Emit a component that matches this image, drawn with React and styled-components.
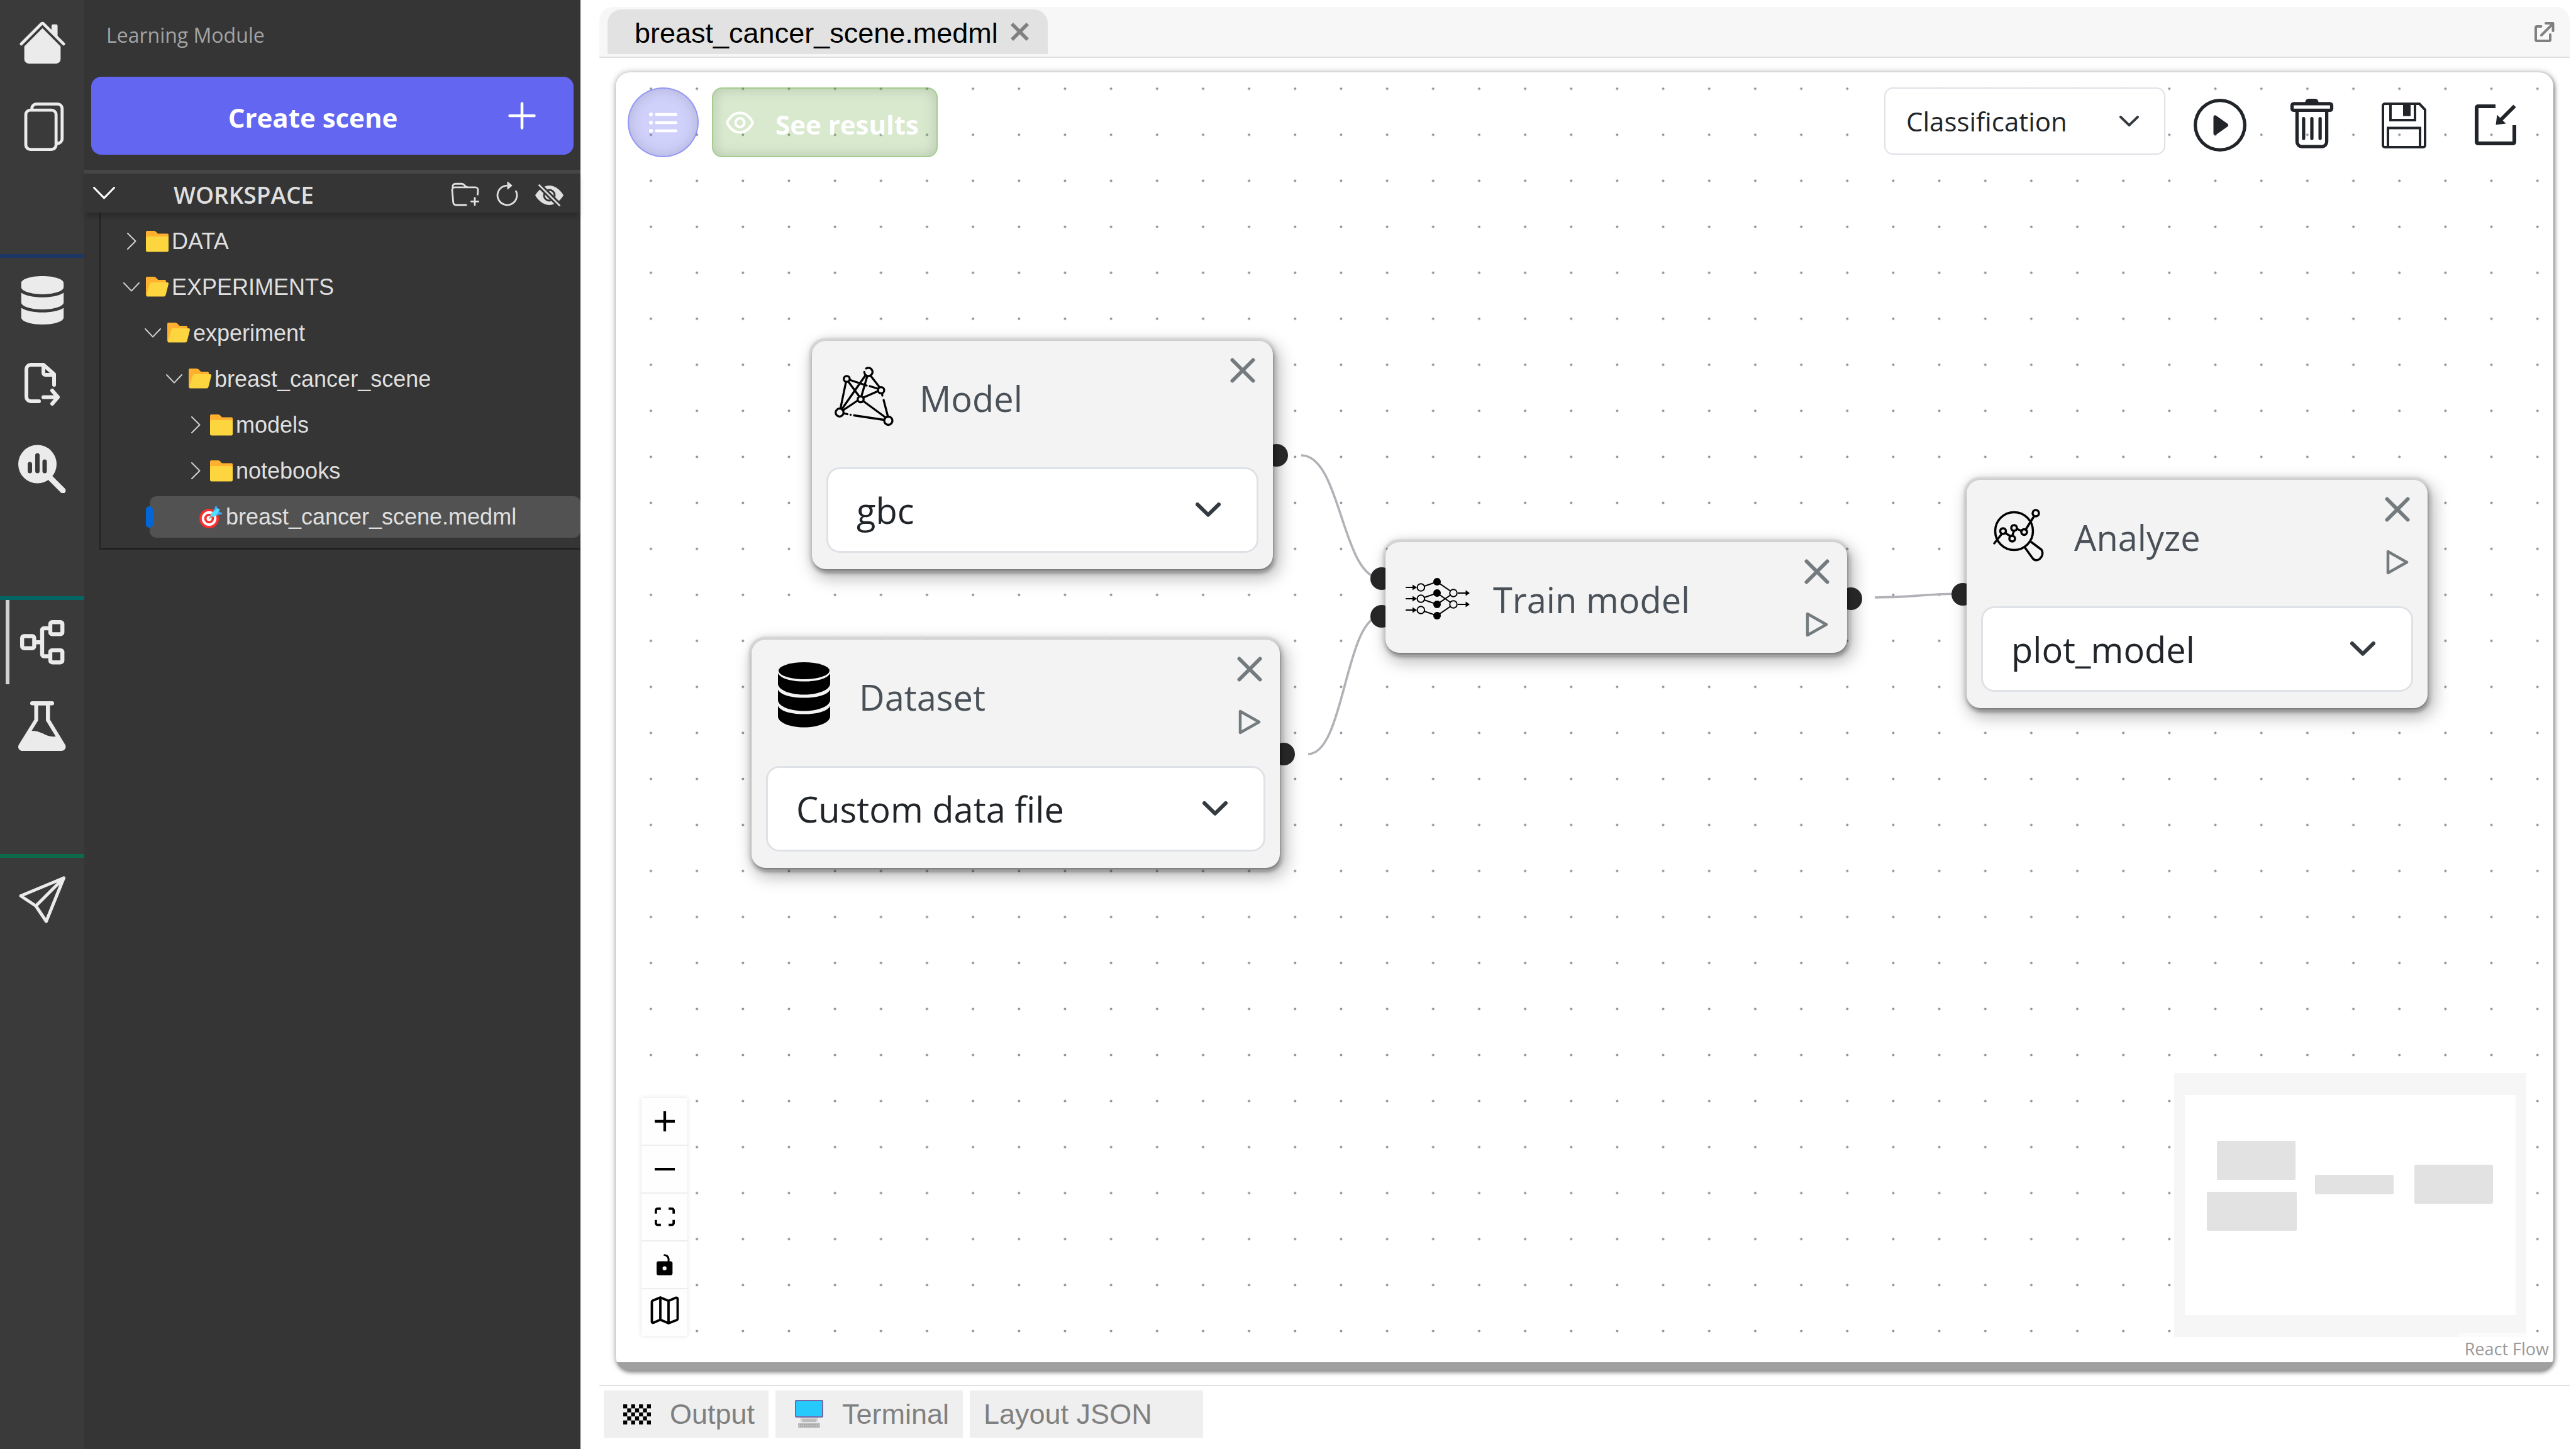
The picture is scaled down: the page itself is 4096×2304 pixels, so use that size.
import React from "react";
import styled, { createGlobalStyle, css } from "styled-components";
import {
  BsHouseFill,
  BsFiles,
  BsFolderPlus,
  BsArrowClockwise,
  BsEyeSlashFill,
  BsPlayCircle,
  BsTrash,
} from "react-icons/bs";
import { FaDatabase } from "react-icons/fa";

const UI_FONT = `"Open Sans", "Noto Sans", sans-serif`;
const TAB_FONT = `"Liberation Sans", Arial, sans-serif`;

/* Zoom level of the flow canvas; the grid has one dot every 20 flow units. */
const ZOOM = 3.6582;
const GRID = 20 * ZOOM;

const GlobalStyle = createGlobalStyle`
  *, *::before, *::after { box-sizing: border-box; }
  body { margin: 0; background: #fff; font-family: ${UI_FONT}; color: #212529; }
  button, select { font: inherit; color: inherit; margin: 0; }
  button { background: none; border: 0; padding: 0; cursor: pointer; }
  h1, h2, p, ul { margin: 0; padding: 0; font-weight: 400; }
  ul { list-style: none; }
  a { color: inherit; text-decoration: none; }
  svg { display: block; flex: none; }
`;

/* ---------- page frame ---------- */

const Page = styled.div`
  display: flex;
  min-height: 100vh;
`;

const Rail = styled.nav`
  flex: 0 0 134px;
  display: flex;
  flex-direction: column;
  gap: 136px;
  background: #3a3a3a;
  color: #ebebeb;
`;

const RailGroup = styled.div`
  display: flex;
  flex-direction: column;
  border-top: ${(p) => (p.$line ? `6px solid ${p.$line}` : "0")};
`;

const RailButton = styled.button`
  height: 134px;
  display: flex;
  align-items: center;
  justify-content: center;
  ${(p) =>
    p.$active &&
    css`
      background: linear-gradient(#d3d3d3, #d3d3d3) 9px 0 / 6px 100% no-repeat;
    `}
`;

/* ---------- workspace panel ---------- */

const Panel = styled.aside`
  flex: 0 0 789px;
  display: flex;
  flex-direction: column;
  background: #353535;
  color: #dfdfdf;
`;

const PanelTitle = styled.p`
  padding: 34px 35px 44px;
  font-size: 32px;
  line-height: 44px;
  color: #a3a3a3;
`;

const CreateButton = styled.button`
  display: flex;
  align-items: center;
  gap: 18px;
  height: 124px;
  margin: 0 11px 24px;
  padding: 0 60px;
  border-radius: 16px;
  background: #6366f1;
  color: #fff;
  font-size: 42px;
  font-weight: 700;
`;

const ButtonLabel = styled.span`
  flex: 1;
  padding-top: 5px;
  text-align: center;
`;

const WorkspaceHeader = styled.header`
  position: relative;
  display: flex;
  align-items: center;
  height: 68px;
  padding: 0 27px 0 14px;
  border-top: 6px solid #464646;
  box-shadow: 0 9px 9px -3px rgba(0, 0, 0, 0.22);
`;

const WorkspaceToggle = styled.button`
  flex: 1;
  display: flex;
  align-items: center;
  gap: 93px;
  font-size: 37px;
  font-weight: 600;
  line-height: 48px;
`;

const ToggleLabel = styled.span`
  padding-top: 5px;
`;

const HeaderTools = styled.div`
  display: flex;
  gap: 22px;
  padding-top: 6px;
`;

const Tree = styled.ul`
  margin-left: 24px;
  padding: 9px 0 13px;
  border-left: 2px solid #222;
  border-bottom: 3px solid #222;
  font-family: ${TAB_FONT};
  font-size: 36px;
`;

const TreeItem = styled.li`
  display: flex;
  align-items: center;
  height: 73px;
  padding-left: ${(p) => (p.$selected ? 72 : 31 + p.$depth * 34)}px;
`;

const TreeRow = styled.button`
  display: flex;
  align-items: center;
  width: 100%;
  gap: 5px;
  text-align: left;
`;

const Twisty = styled.span`
  flex: 0 0 36px;
  display: flex;
  justify-content: center;
`;

const SelectedMark = styled.span`
  width: 11px;
  height: 34px;
  border-radius: 6px;
  background: #0366d6;
  z-index: 1;
`;

const SelectedRow = styled(TreeRow)`
  height: 66px;
  margin-left: -5px;
  padding-left: 79px;
  border-radius: 11px;
  background: #525252;
`;

/* ---------- main area ---------- */

const Main = styled.main`
  flex: 1;
  min-width: 0;
  display: flex;
  flex-direction: column;
  padding: 11px 10px 18px 30px;
`;

const TabBar = styled.div`
  display: flex;
  align-items: center;
  justify-content: space-between;
  height: 81px;
  padding: 0 24px 0 13px;
  border-bottom: 2px solid #e0e0e0;
  border-radius: 22px 22px 0 0;
  background: #f7f7f7;
  color: #808080;
`;

const Tab = styled.div`
  display: flex;
  align-items: center;
  gap: 20px;
  height: 71px;
  padding: 0 30px 0 43px;
  border-radius: 22px 22px 0 0;
  background: #e2e2e2;
  font-family: ${TAB_FONT};
  font-size: 45px;
`;

const TabName = styled.span`
  padding-top: 4px;
  color: #000;
`;

const Card = styled.section`
  flex: 1;
  display: flex;
  margin: 23px 26px;
  padding-bottom: 13px;
  border-radius: 22px;
  background: #a0a0a0;
  overflow: hidden;
  box-shadow: 0 0 11px rgba(0, 0, 0, 0.28), 2px 3px 6px rgba(0, 0, 0, 0.4);
`;

const Canvas = styled.div`
  position: relative;
  flex: 1;
  background: #fff;
`;

const Layer = styled.svg`
  position: absolute;
  inset: 0;
  width: 100%;
  height: 100%;
`;

const Toolbar = styled.div`
  position: relative;
  display: flex;
  align-items: flex-start;
  gap: 45px;
  padding: 24px 50px 0 19px;
`;

const ToolbarStart = styled.div`
  flex: 1;
  display: flex;
  gap: 21px;
`;

const tinted = css`
  display: flex;
  align-items: center;
  height: 111px;
  color: #fff;
  box-shadow: inset 0 0 22px rgba(0, 0, 0, 0.16);
`;

const RoundButton = styled.button`
  ${tinted}
  justify-content: center;
  width: 113px;
  border: 2px solid rgba(99, 102, 241, 0.55);
  border-radius: 50%;
  background: rgba(99, 102, 241, 0.3);
`;

const ResultsButton = styled.button`
  ${tinted}
  gap: 26px;
  width: 359px;
  padding: 0 20px;
  border: 2px solid rgba(104, 171, 67, 0.45);
  border-radius: 16px;
  background: rgba(104, 171, 67, 0.26);
  font-size: 42px;
  font-weight: 700;
`;

const ToolbarIcons = styled.div`
  display: flex;
  gap: 62px;
  padding-top: 18px;
`;

const IconButton = styled.button`
  display: flex;
  align-items: center;
  justify-content: center;
  width: ${(p) => p.$size}px;
  height: ${(p) => p.$size}px;
`;

/* A native select and its chevron share one grid cell. */
const SelectFrame = styled.div`
  display: grid;
  align-items: center;
  width: ${(p) => (p.$large ? "auto" : "447px")};
  height: ${(p) => (p.$large ? 136 : 107)}px;
  margin: ${(p) => (p.$large ? "25px 23px 26px" : "0")};
  > * {
    grid-area: 1 / 1;
  }
  > svg {
    justify-self: end;
    margin-right: ${(p) => (p.$large ? 60 : 42)}px;
    pointer-events: none;
  }
`;

const Select = styled.select`
  appearance: none;
  width: 100%;
  height: 100%;
  padding: ${(p) => (p.$large ? "0 120px 0 45px" : "0 80px 0 33px")};
  border: ${(p) => (p.$large ? 3 : 2)}px solid #dee2e6;
  border-radius: ${(p) => (p.$large ? 21 : 14)}px;
  background: #fff;
  color: #212529;
  font-size: ${(p) => (p.$large ? 56 : 42)}px;
`;

/* ---------- flow nodes ---------- */

const NodeFrame = styled.article`
  position: absolute;
  left: ${(p) => p.$x}px;
  top: ${(p) => p.$y}px;
  width: ${(p) => p.$w}px;
  padding: 5px;
  border-radius: 27px;
  background: rgba(0, 0, 0, 0.14);
  box-shadow: 6px 10px 26px rgba(0, 0, 0, 0.26), 0 0 10px rgba(0, 0, 0, 0.08);
`;

const NodeBody = styled.div`
  position: relative;
  display: flow-root;
  border-radius: 22px;
  background: #f3f3f3;
  box-shadow: 2px 5px 6px rgba(0, 0, 0, 0.42), 0 0 6px rgba(0, 0, 0, 0.1);
`;

const NodeHeader = styled.header`
  display: flex;
  align-items: center;
  gap: 36px;
  height: 176px;
  padding: 0 28px 0 31px;
`;

const NodeIcon = styled.span`
  flex: 0 0 104px;
  display: flex;
  justify-content: center;
`;

const NodeTitle = styled.h2`
  flex: 1;
  padding-top: 5px;
  font-size: 56px;
  line-height: 76px;
  color: #495057;
`;

const NodeActions = styled.div`
  align-self: flex-start;
  display: flex;
  flex-direction: column;
  gap: 44px;
  padding-top: 27px;
  color: #747b7f;
`;

const Handle = styled.span`
  position: absolute;
  top: ${(p) => p.$top};
  ${(p) => p.$side}: -19px;
  width: 36px;
  height: 36px;
  margin-top: -18px;
  border-radius: 50%;
  background: #262626;
`;

/* ---------- canvas overlays ---------- */

const Controls = styled.div`
  position: absolute;
  left: 41px;
  bottom: 42px;
  display: flex;
  flex-direction: column;
  width: 73px;
  background: #fefefe;
  box-shadow: 0 0 7px rgba(0, 0, 0, 0.12);
`;

const ControlButton = styled.button`
  display: flex;
  align-items: center;
  justify-content: center;
  height: 76px;
  border-bottom: 2px solid #eee;
  &:last-child {
    height: 74px;
    padding-bottom: 8px;
    border-bottom: 0;
  }
`;

const MiniMap = styled.svg`
  position: absolute;
  right: 43px;
  bottom: 40px;
  width: 560px;
  height: 420px;
`;

const Attribution = styled.a`
  position: absolute;
  right: 0;
  bottom: 0;
  padding: 7px 7px 3px 9px;
  background: rgba(255, 255, 255, 0.5);
  color: #999;
  font-size: 27px;
  line-height: 37px;
`;

/* ---------- bottom tabs ---------- */

const BottomBar = styled.div`
  display: flex;
  gap: 11px;
  padding: 7px 7px 0;
  border-top: 2px solid #e0e0e0;
`;

const BottomTab = styled.button`
  display: flex;
  align-items: center;
  gap: 30px;
  width: ${(p) => p.$w}px;
  height: 75px;
  padding-left: ${(p) => (p.$plain ? 22 : 31)}px;
  background: #efefef;
  color: #808080;
  font-family: ${TAB_FONT};
  font-size: 45px;
`;

/* ---------- drawings ---------- */

const line = {
  fill: "none",
  stroke: "currentColor",
  strokeLinecap: "round",
  strokeLinejoin: "round",
};

const ExportIcon = () => (
  <svg width="58" height="68" viewBox="0 0 58 68" {...line} strokeWidth="6">
    <path d="M48 35V18L31 3H11a7 7 0 0 0-7 7v44a7 7 0 0 0 7 7h13" />
    <path d="M31 4v12a3 3 0 0 0 3 3h13M31 54.5h23M45 44l9 10.5L45 65" />
  </svg>
);

const ExploreIcon = () => (
  <svg width="76" height="77" viewBox="0 0 76 77" {...line}>
    <circle cx="30.5" cy="31" r="30.5" fill="currentColor" stroke="none" />
    <path d="M52 54l19 19" strokeWidth="9" />
    <path d="M18.500 31v11M30.500 17v25M42 27v15" stroke="#3a3a3a" strokeWidth="7" />
  </svg>
);

const FlowIcon = () => (
  <svg width="71" height="71" viewBox="0 0 71 71" {...line} strokeWidth="6.400">
    <rect x="3.200" y="25.500" width="19.200" height="19.200" rx="3" />
    <rect x="48" y="3.200" width="19.200" height="19.200" rx="3" />
    <rect x="48" y="48" width="19.200" height="19.200" rx="3" />
    <path d="M26 35.200h9M47 13h-9a3 3 0 0 0-3 3v38.500a3 3 0 0 0 3 3h9" />
  </svg>
);

const FlaskIcon = () => (
  <svg width="76" height="80" viewBox="0 0 76 80" fill="currentColor">
    <rect x="19" y="0" width="38" height="6.400" rx="3.200" />
    <path
      fillRule="evenodd"
      d="M25.500 4h25v25.300L74.500 69c3 5-1 10-6 10H7c-5 0-9-5-6-10l24.500-39.700zM31.700 6.400V30.500L21.400 47c19 .5 20 10 38.300 9.300L44 30.500V6.400z"
    />
  </svg>
);

const PlaneIcon = () => (
  <svg width="75" height="76" viewBox="0 0 75 76" {...line} strokeWidth="5">
    <path d="M71.500 3L3 31.500l24 16L43.500 72zM71.500 3L27 47.500" />
  </svg>
);

const PlusIcon = () => (
  <svg width="44" height="44" viewBox="0 0 44 44" {...line} strokeWidth="4.500">
    <path d="M22 2.500v39M2.500 22h39" />
  </svg>
);

const Chevron = ({ width, height, stroke, color = "#343a40" }) => (
  <svg
    width={width}
    height={height}
    viewBox={`0 0 ${width} ${height}`}
    {...line}
    stroke={color}
    strokeWidth={stroke}
  >
    <path
      d={`M${stroke / 2} ${stroke / 2}L${width / 2} ${height - stroke / 1.4}L${width - stroke / 2} ${stroke / 2}`}
    />
  </svg>
);

const ClosedTwisty = () => (
  <svg width="15" height="27" viewBox="0 0 15 27" {...line} stroke="#cfcfcf" strokeWidth="2">
    <path d="M1 1l12.500 12.500L1 26" />
  </svg>
);

const FolderIcon = ({ open }) => (
  <svg width="36" height="34" viewBox="0 0 36 34">
    {open ? (
      <>
        <path fill="#ffb02e" d="M2 0h8c3 0 5 0 7 2.500L19.500 5H30a2 2 0 0 1 2 2v8L10 31H3a3 3 0 0 1-3-3V2a2 2 0 0 1 2-2z" />
        <path fill="#fcd53f" d="M9.500 9H34a2 2 0 0 1 2 2.500L31.500 29a3 3 0 0 1-3 2.500H3a2 2 0 0 1-2-3L6.500 11a3 3 0 0 1 3-2z" />
      </>
    ) : (
      <>
        <path fill="#ffb02e" d="M2 0h10c2 0 3 .5 4.500 2L19 4.500h15a2 2 0 0 1 2 2V16H0V2a2 2 0 0 1 2-2z" />
        <path fill="#fcd53f" d="M1.500 9h33A1.500 1.500 0 0 1 36 10.500V31a2.500 2.500 0 0 1-2.500 2.500h-31A2.500 2.500 0 0 1 0 31V10.500A1.500 1.500 0 0 1 1.500 9z" />
      </>
    )}
  </svg>
);

const TargetIcon = () => (
  <svg width="37" height="36" viewBox="0 0 37 36">
    <circle cx="15.500" cy="20.500" r="15.500" fill="#f92f2f" />
    <circle cx="15.500" cy="20.500" r="11.700" fill="#fff" />
    <circle cx="15.500" cy="20.500" r="7.800" fill="#f92f2f" />
    <circle cx="15.500" cy="20.500" r="4" fill="#fff" />
    <path d="M15.500 20.500l6-6" stroke="#9b9b9b" strokeWidth="1.800" />
    <path d="M18 15l6-10c1-3 2-5 3-5l2 5 3 1-1 3 5 3c1 1-1 2-3 2l-11 3z" fill="#46a4fb" />
    <path d="M17.500 17c0-5 3-6 6-8l5-5 4 2-5 8c-2 4-5 4-10 3z" fill="#50e2ff" />
  </svg>
);

const CloseTabIcon = () => (
  <svg width="29" height="29" viewBox="0 0 29 29" fill="currentColor">
    <path d="M4 0l10.500 10.500L25 0l4 4-10.500 10.500L29 25l-4 4-10.500-10.500L4 29l-4-4 10.500-10.500L0 4z" />
  </svg>
);

const PopoutIcon = () => (
  <svg width="32" height="32" viewBox="0 0 32 32" {...line} strokeWidth="4">
    <path d="M10.500 7H4a2 2 0 0 0-2 2v19a2 2 0 0 0 2 2h19a2 2 0 0 0 2-2v-8" />
    <path d="M18 2h11.500v12M29 3L11 21" />
  </svg>
);

const ListIcon = () => (
  <svg width="45" height="32" viewBox="0 0 45 32" fill="currentColor">
    {[3, 16, 29].map((y) => (
      <g key={y}>
        <circle cx="3" cy={y} r="3" />
        <rect x="9.500" y={y - 2.300} width="35.500" height="4.600" rx="2" />
      </g>
    ))}
  </svg>
);

const EyeIcon = () => (
  <svg width="45" height="36" viewBox="0 0 45 36" {...line} strokeWidth="4">
    <path d="M2 18C7 8 14 2.500 22.500 2.500S38 8 43 18c-5 10-12 15.500-20.500 15.500S7 28 2 18z" />
    <circle cx="22.500" cy="18" r="7" />
  </svg>
);

const SaveIcon = () => (
  <svg width="71" height="73" viewBox="0 0 71 73" fill="none" stroke="#212529" strokeWidth="4">
    <path d="M5 2h55l9 9.500V68a3 3 0 0 1-3 3H5a3 3 0 0 1-3-3V5a3 3 0 0 1 3-3z" />
    <path d="M14 2v26h39V2M10 71V40.500h51V71" />
    <path d="M34 3h12v18.500H34z" fill="#212529" stroke="none" />
  </svg>
);

const ImportIcon = () => (
  <svg width="66" height="66" viewBox="0 0 66 66" fill="none" stroke="#212529" strokeWidth="6">
    <path d="M33 3H5a2 2 0 0 0-2 2v55a2 2 0 0 0 2 2h56a2 2 0 0 0 2-2V33" />
    <path d="M63.500 2.500L42 24" />
    <path d="M35.500 16.500l-2 16 16-2z" fill="#212529" stroke="none" />
  </svg>
);

const CloseIcon = () => (
  <svg width="40" height="40" viewBox="0 0 40 40" {...line} strokeWidth="6">
    <path d="M3.500 3.500l33 33M36.500 3.500l-33 33" />
  </svg>
);

const RunIcon = () => (
  <svg width="36" height="40" viewBox="0 0 36 40" {...line} strokeWidth="4.500">
    <path d="M3 3v34l30-17z" />
  </svg>
);

const ModelIcon = () => (
  <svg width="94" height="95" viewBox="0 0 94 95" {...line} stroke="#000" strokeWidth="3.300">
    <path d="M49 14L12 67M57 14l14 18M52 15L43 46M24 21l27 9M56 31l13 4M18 25L9.500 66M22 24l17 23M46 49l23-10M36.500 54L14 69M46 55l34 25M75.500 43l.5 3M78 53l6.500 25M15.500 74.500l5 1M25.500 76.500h.1M31 77.500l47 7" />
    <g fill="#f3f3f3">
      <path d="M47.300 8.500a6.500 6.500 0 1 0 3-5.600" />
      <circle cx="19.400" cy="19.500" r="4.700" />
      <circle cx="74" cy="37.500" r="4.900" />
      <circle cx="41.500" cy="52" r="4.700" />
      <circle cx="8" cy="73" r="6.300" />
      <circle cx="85.500" cy="86" r="6.500" />
    </g>
  </svg>
);

const diskSlices = [0, 26, 52];

const DatasetIcon = () => (
  <svg width="83" height="104" viewBox="0 0 83 104">
    <ellipse cx="41.500" cy="13.500" rx="40.500" ry="13.500" />
    {diskSlices.map((y) => (
      <path
        key={y}
        transform={`translate(0 ${y})`}
        d="M0 17.500C4 26 21 30.600 41.500 30.600S79 26 83 17.500V34c0 10-19 17.500-41.500 17.500S0 44 0 34z"
      />
    ))}
  </svg>
);

const TrainIcon = () => (
  <svg width="102" height="70" viewBox="0 -4 102 70" stroke="#000" strokeWidth="2">
    <path d="M24 15L50 6l26 18M24 33l26-9 26 18M24 33l26 9 26-18M24 51l26 9 26-18" fill="none" />
    {[15, 33, 51].map((y) => (
      <g key={y}>
        <path d={`M0 ${y}h12`} />
        <path d={`M11 ${y - 4.500}l7 4.500-7 4.500z`} stroke="none" />
        <circle cx="24.300" cy={y} r="5.800" fill="#f3f3f3" />
      </g>
    ))}
    {[6, 24, 42, 60].map((y) => (
      <circle key={y} cx="50" cy={y} r="6" stroke="none" />
    ))}
    {[24, 42].map((y) => (
      <g key={y}>
        <circle cx="76" cy={y} r="5.800" fill="#f3f3f3" />
        <path d={`M83 ${y}h13`} />
        <path d={`M95.500 ${y - 4.500}l6.500 4.500-6.500 4.500z`} stroke="none" />
      </g>
    ))}
  </svg>
);

const AnalyzeIcon = () => (
  <svg width="82" height="84" viewBox="0 0 82 84" {...line} stroke="#000" strokeWidth="3.500">
    <circle cx="33.500" cy="35.500" r="30" />
    <path d="M51 62l11.500 16c3 4.500 8 5 12 1.500 4.500-4 5.500-10 2.500-14.500L61 53" />
    <path d="M2 55l12-15M19.500 38.500l8 5M31 42l2-6M38 32l7 3M52 33L65.500 11.500" />
    <circle cx="68" cy="7" r="5" />
    <circle cx="16" cy="35.500" r="4.500" />
    <circle cx="33.500" cy="30.500" r="4.500" />
    <circle cx="49.500" cy="37" r="4.500" />
    <circle cx="30.500" cy="47.500" r="4.500" />
  </svg>
);

const ZoomInIcon = () => (
  <svg width="32" height="32" viewBox="0 0 32 32">
    <path d="M32 18.133H18.133V32h-4.266V18.133H0v-4.266h13.867V0h4.266v13.867H32z" />
  </svg>
);

const ZoomOutIcon = () => (
  <svg width="32" height="5" viewBox="0 0 32 5">
    <path d="M0 0h32v4.200H0z" />
  </svg>
);

const FitIcon = () => (
  <svg width="32" height="32" viewBox="0 0 32 30">
    <path d="M3.692 4.630c0-.53.4-.938.939-.938h5.215V0H4.708C2.130 0 0 2.054 0 4.630v5.216h3.692V4.631zM27.354 0h-5.200v3.692h5.170c.53 0 .984.4.984.939v5.215H32V4.631A4.624 4.624 0 0027.354 0zm.954 24.830c0 .532-.4.94-.939.94h-5.215v3.768h5.215c2.577 0 4.631-2.130 4.631-4.707v-5.139h-3.692v5.139zm-23.677.94a.919.919 0 01-.939-.94v-5.138H0v5.139c0 2.577 2.130 4.707 4.708 4.707h5.138V25.770H4.631z" />
  </svg>
);

const UnlockIcon = () => (
  <svg width="26" height="34" viewBox="0 0 25 32">
    <path d="M21.333 10.667H19.810V7.619C19.810 3.429 16.380 0 12.190 0c-4.114 1.828-1.370 2.133.305 2.438 1.676.305 4.420 2.590 4.420 5.181v3.048H3.047A3.056 3.056 0 000 13.714v15.238A3.056 3.056 0 003.048 32h18.285a3.056 3.056 0 003.048-3.048V13.714a3.056 3.056 0 00-3.048-3.047zM12.190 24.533a3.056 3.056 0 01-3.047-3.047 3.056 3.056 0 013.047-3.048 3.056 3.056 0 013.048 3.048 3.056 3.056 0 01-3.048 3.047z" />
  </svg>
);

const MapIcon = () => (
  <svg width="46" height="45" viewBox="0 0 46 45" {...line} stroke="#000" strokeWidth="3.800">
    <path d="M2.500 9c0-1 .5-1.500 1.500-2L16 2l13 5.500L40.500 2.500c1.500-.5 3 .3 3 2V36c0 1-.5 1.500-1.500 2L29 43l-13-5.500-11 4.800c-1.500.5-2.500-.3-2.500-2zM16 2v35.500M29 7.500V43" />
  </svg>
);

const CheckerIcon = () => (
  <svg width="44" height="32" viewBox="0 0 44 32">
    {Array.from({ length: 35 }, (_, i) => i)
      .filter((i) => i % 2 === 0)
      .map((i) => (
        <rect
          key={i}
          x={((i % 7) * 44) / 7}
          y={(Math.floor(i / 7) * 32) / 5}
          width={44 / 7}
          height={32 / 5}
        />
      ))}
  </svg>
);

const ComputerIcon = () => (
  <svg width="45" height="45" viewBox="0 0 45 45">
    <path d="M8.500 27v4a4 4 0 0 0 4 4h20a4 4 0 0 0 4-4v-4" fill="#d3d3d3" />
    <rect x="11.500" y="30" width="22" height="5" fill="#bdbdbd" />
    <rect x="0" y="0" width="45" height="28" rx="2" fill="#7467a8" />
    <rect x="2" y="2" width="41" height="24" rx="1" fill="#26c9fc" />
    <rect x="5" y="36.500" width="35" height="8" rx="1.500" fill="#bdbdbd" />
    <path d="M8 39h29M8 41.700h29" stroke="#8f8f8f" strokeWidth="1.200" strokeDasharray="2 1" />
  </svg>
);

/* ---------- data ---------- */

const folders = [
  { name: "DATA", depth: 0 },
  { name: "EXPERIMENTS", depth: 0, open: true },
  { name: "experiment", depth: 1, open: true },
  { name: "breast_cancer_scene", depth: 2, open: true },
  { name: "models", depth: 3 },
  { name: "notebooks", depth: 3 },
];

const nodes = [
  { title: "Model", icon: ModelIcon, x: 307, y: 422, w: 743, option: "gbc", outputs: ["50%"] },
  { title: "Dataset", icon: DatasetIcon, x: 211, y: 897, w: 850, option: "Custom data file", run: true, outputs: ["50%"] },
  { title: "Train model", icon: TrainIcon, x: 1219, y: 742, w: 744, run: true, inputs: ["34%", "66%"], outputs: ["51%"] },
  { title: "Analyze", icon: AnalyzeIcon, x: 2143, y: 643, w: 743, option: "plot_model", run: true, inputs: ["50%"] },
];

const edges = [
  [1090, 609, 1218, 805],
  [1101, 1084, 1218, 864],
  [2002, 835, 2142, 829],
];

const miniNodes = [
  [68, 108, 125, 62],
  [52, 189, 143, 62],
  [224, 162, 125, 31],
  [382, 146, 125, 62],
];

/* ---------- components ---------- */

function Dropdown({ label, value, large }) {
  return (
    <SelectFrame $large={large}>
      <Select $large={large} aria-label={label} defaultValue={value}>
        <option>{value}</option>
      </Select>
      {large ? (
        <Chevron width={40} height={24} stroke={6} />
      ) : (
        <Chevron width={31} height={18} stroke={4} />
      )}
    </SelectFrame>
  );
}

function FlowNode({ title, icon: Icon, x, y, w, option, run, inputs = [], outputs = [] }) {
  return (
    <NodeFrame $x={x} $y={y} $w={w}>
      {inputs.map((top) => (
        <Handle key={top} $side="left" $top={top} />
      ))}
      {outputs.map((top) => (
        <Handle key={top} $side="right" $top={top} />
      ))}
      <NodeBody>
        <NodeHeader>
          <NodeIcon>
            <Icon />
          </NodeIcon>
          <NodeTitle>{title}</NodeTitle>
          <NodeActions>
            <IconButton $size={40} aria-label="Remove">
              <CloseIcon />
            </IconButton>
            {run && (
              <IconButton $size={40} aria-label="Run">
                <RunIcon />
              </IconButton>
            )}
          </NodeActions>
        </NodeHeader>
        {option && <Dropdown large label={title} value={option} />}
      </NodeBody>
    </NodeFrame>
  );
}

function SideRail() {
  return (
    <Rail>
      <RailGroup>
        <RailButton aria-label="Home"><BsHouseFill size={77} /></RailButton>
        <RailButton aria-label="Files"><BsFiles size={77} /></RailButton>
      </RailGroup>
      <RailGroup $line="#1d3665">
        <RailButton aria-label="Input"><FaDatabase size={77} /></RailButton>
        <RailButton aria-label="Extraction"><ExportIcon /></RailButton>
        <RailButton aria-label="Exploratory"><ExploreIcon /></RailButton>
      </RailGroup>
      <RailGroup $line="#046664">
        <RailButton $active aria-label="Learning"><FlowIcon /></RailButton>
        <RailButton aria-label="Evaluation"><FlaskIcon /></RailButton>
      </RailGroup>
      <RailGroup $line="#0b6b48">
        <RailButton aria-label="Application"><PlaneIcon /></RailButton>
      </RailGroup>
    </Rail>
  );
}

function WorkspacePanel() {
  return (
    <Panel>
      <PanelTitle>Learning Module</PanelTitle>
      <CreateButton>
        <ButtonLabel>Create scene</ButtonLabel>
        <PlusIcon />
      </CreateButton>
      <WorkspaceHeader>
        <WorkspaceToggle>
          <Chevron width={35} height={20} stroke={3} color="#fff" />
          <ToggleLabel>WORKSPACE</ToggleLabel>
        </WorkspaceToggle>
        <HeaderTools>
          <IconButton $size={45} aria-label="New folder"><BsFolderPlus size={45} /></IconButton>
          <IconButton $size={45} aria-label="Refresh"><BsArrowClockwise size={45} /></IconButton>
          <IconButton $size={45} aria-label="Hide files"><BsEyeSlashFill size={45} /></IconButton>
        </HeaderTools>
      </WorkspaceHeader>
      <Tree>
        {folders.map(({ name, depth, open }) => (
          <TreeItem key={name} $depth={depth}>
            <TreeRow>
              <Twisty>
                {open ? <Chevron width={26} height={15} stroke={2} color="#cfcfcf" /> : <ClosedTwisty />}
              </Twisty>
              <FolderIcon open={open} />
              {name}
            </TreeRow>
          </TreeItem>
        ))}
        <TreeItem $selected>
          <SelectedMark />
          <SelectedRow>
            <TargetIcon />
            breast_cancer_scene.medml
          </SelectedRow>
        </TreeItem>
      </Tree>
    </Panel>
  );
}

export default function App() {
  return (
    <>
      <GlobalStyle />
      <Page>
        <SideRail />
        <WorkspacePanel />
        <Main>
          <TabBar>
            <Tab>
              <TabName>breast_cancer_scene.medml</TabName>
              <IconButton $size={29} aria-label="Close tab"><CloseTabIcon /></IconButton>
            </Tab>
            <IconButton $size={32} aria-label="Open in new window"><PopoutIcon /></IconButton>
          </TabBar>
          <Card>
            <Canvas>
              <Layer aria-hidden="true">
                <pattern id="grid" x="20" y="-10" width={GRID} height={GRID} patternUnits="userSpaceOnUse">
                  <circle cx="36" cy="36" r="2" fill="#91919a" />
                </pattern>
                <rect width="100%" height="100%" fill="url(#grid)" />
                {edges.map(([x1, y1, x2, y2]) => (
                  <path
                    key={x1}
                    d={`M${x1} ${y1}C${(x1 + x2) / 2} ${y1} ${(x1 + x2) / 2} ${y2} ${x2} ${y2}`}
                    fill="none"
                    stroke="#b1b1b7"
                    strokeWidth={ZOOM}
                  />
                ))}
              </Layer>
              <Toolbar>
                <ToolbarStart>
                  <RoundButton aria-label="Pipelines"><ListIcon /></RoundButton>
                  <ResultsButton>
                    <EyeIcon />
                    <ButtonLabel>See results</ButtonLabel>
                  </ResultsButton>
                </ToolbarStart>
                <Dropdown label="Task" value="Classification" />
                <ToolbarIcons>
                  <IconButton $size={84} aria-label="Run all"><BsPlayCircle size={84} /></IconButton>
                  <IconButton $size={84} aria-label="Clear"><BsTrash size={84} /></IconButton>
                  <IconButton $size={84} aria-label="Save"><SaveIcon /></IconButton>
                  <IconButton $size={84} aria-label="Import"><ImportIcon /></IconButton>
                </ToolbarIcons>
              </Toolbar>
              {nodes.map((node) => (
                <FlowNode key={node.title} {...node} />
              ))}
              <Controls>
                <ControlButton aria-label="Zoom in"><ZoomInIcon /></ControlButton>
                <ControlButton aria-label="Zoom out"><ZoomOutIcon /></ControlButton>
                <ControlButton aria-label="Fit view"><FitIcon /></ControlButton>
                <ControlButton aria-label="Lock"><UnlockIcon /></ControlButton>
                <ControlButton aria-label="Toggle map"><MapIcon /></ControlButton>
              </Controls>
              <MiniMap viewBox="0 0 560 420" role="img" aria-label="Mini map">
                <rect width="560" height="420" fill="#f6f6f6" />
                <rect x="17" y="35" width="526" height="350" fill="#fff" />
                {miniNodes.map(([x, y, w, h]) => (
                  <rect key={x} x={x} y={y} width={w} height={h} rx="2" fill="#e2e2e2" />
                ))}
              </MiniMap>
              <Attribution href="#">React Flow</Attribution>
            </Canvas>
          </Card>
          <BottomBar>
            <BottomTab $w={262}><CheckerIcon />Output</BottomTab>
            <BottomTab $w={298}><ComputerIcon />Terminal</BottomTab>
            <BottomTab $w={371} $plain>Layout JSON</BottomTab>
          </BottomBar>
        </Main>
      </Page>
    </>
  );
}
